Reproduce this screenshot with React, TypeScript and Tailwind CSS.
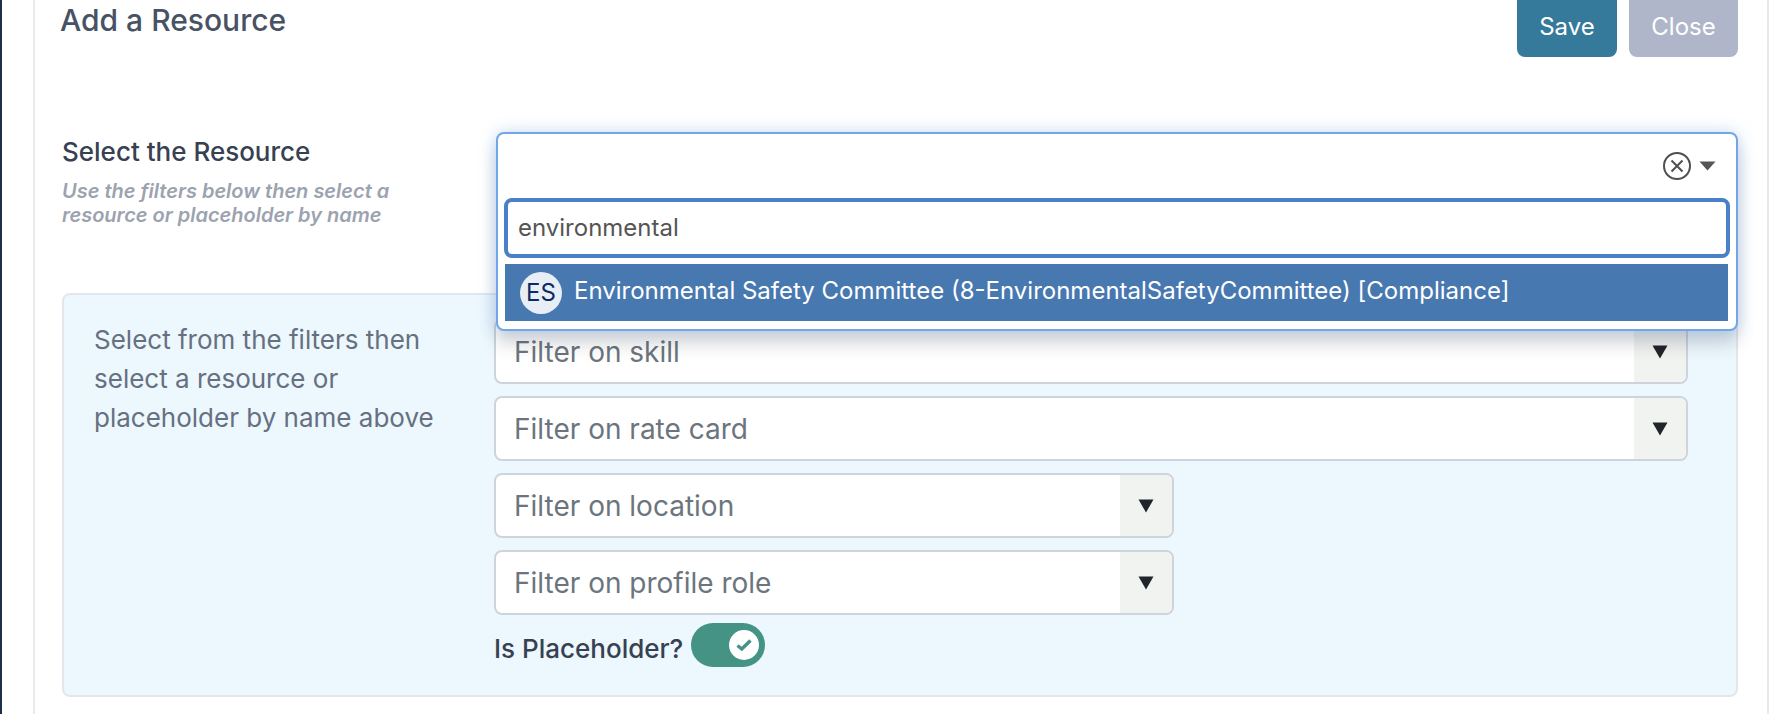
import React from "react";

function Caret() {
  return (
    <svg width="16" height="14" viewBox="0 0 16 14" aria-hidden="true">
      <path d="M0.5 0.5H15.5L8 13.5Z" fill="#212529" />
    </svg>
  );
}

function FilterSelect({ label, narrow }: { label: string; narrow?: boolean }) {
  return (
    <div
      className={`flex h-[65px] items-stretch overflow-hidden rounded-[8px] border-2 border-[#ced4da] bg-white ${
        narrow ? "w-[680px]" : "w-[1194px]"
      }`}
    >
      <div className="flex flex-1 items-center pl-[18px] text-[28px] text-[#6c757d]">{label}</div>
      <div className="flex w-[52px] items-center justify-center bg-[#f1f3f1]">
        <Caret />
      </div>
    </div>
  );
}

export default function App() {
  return (
    <div className="flex h-[714px] w-[1792px] overflow-hidden bg-white font-['Inter',sans-serif]">
      <div className="w-[2px] shrink-0 bg-[#1f2f47]" />
      <div className="ml-[31px] mr-[23px] flex h-[760px] flex-1 flex-col border-x-2 border-[#e9eaec] bg-white pl-[27px] pr-[29px]">
        <div className="-mt-[7px] flex items-start justify-between">
          <h1 className="-ml-[2px] mt-[6px] text-[30px] leading-[42px] font-medium text-[#475264]">Add a Resource</h1>
          <div className="flex gap-[12px]">
            <button className="flex h-[64px] w-[100px] items-center justify-center rounded-[8px] bg-[#367a9b] pt-[4px] text-[24px] text-white">
              Save
            </button>
            <button className="flex h-[64px] w-[109px] items-center justify-center rounded-[8px] bg-[#b0b6ca] pt-[4px] text-[24px] text-white">
              Close
            </button>
          </div>
        </div>

        <div className="mt-[75px] flex">
          <div className="w-[434px] shrink-0">
            <div className="mt-[2px] text-[26px] leading-[36px] font-medium text-[#374151]">Select the Resource</div>
            <div className="mt-[9px] text-[20px] leading-[24px] font-semibold text-[#9ca3af] italic">
              Use the filters below then select a<br />
              resource or placeholder by name
            </div>
          </div>
          <div className="relative h-[161px] flex-1">
            <div className="absolute inset-x-0 top-0 z-10 flex h-[199px] flex-col rounded-[8px] border-2 border-[#71a7e6] bg-white shadow-[0_0_16px_rgba(90,150,230,0.35),0_14px_18px_rgba(0,0,0,0.14)]">
              <div className="flex h-[64px] shrink-0 items-center justify-end pr-[20px]">
                <svg width="30" height="30" viewBox="0 0 30 30" fill="none" stroke="#4f4f4f" strokeWidth="2" aria-hidden="true">
                  <circle cx="15" cy="15" r="13" />
                  <path d="M9.5 9.5L20.5 20.5M20.5 9.5L9.5 20.5" />
                </svg>
                <svg className="ml-[7px]" width="17" height="10" viewBox="0 0 17 10" aria-hidden="true">
                  <path d="M0.5 0.5H16.5L8.5 9.5Z" fill="#555555" />
                </svg>
              </div>
              <div className="ml-[6px] mr-[6px] flex h-[60px] items-center rounded-[8px] border-4 border-[#4a80c8] pl-[10px] text-[24px] text-[#555555]">
                environmental
              </div>
              <div className="ml-[7px] mr-[8px] mt-[6px] flex h-[57px] items-center bg-[#4878b0] pl-[15px] text-[24px] text-white">
                <span className="mr-[12px] flex h-[42px] w-[42px] items-center justify-center rounded-full bg-[#e8eef6] text-[24px] text-[#0f2a63]">
                  ES
                </span>
                <span className="pb-[3px]">Environmental Safety Committee (8-EnvironmentalSafetyCommittee) [Compliance]</span>
              </div>
            </div>
          </div>
        </div>

        <div className="flex h-[404px] rounded-[8px] border-2 border-[#e3e7ec] bg-[#ecf7fe]">
          <div className="w-[430px] shrink-0 pl-[30px] pt-[25px] text-[26px] leading-[39px] text-[#667080]">
            Select from the filters then
            <br />
            select a resource or
            <br />
            placeholder by name above
          </div>
          <div className="flex flex-col gap-[12px] pt-[24px]">
            <FilterSelect label="Filter on skill" />
            <FilterSelect label="Filter on rate card" />
            <FilterSelect label="Filter on location" narrow />
            <FilterSelect label="Filter on profile role" narrow />
            <div className="-mt-[5px] flex items-start gap-[8px]">
              <span className="mt-[7px] text-[26px] leading-[39px] font-medium text-[#374151]">Is Placeholder?</span>
              <span className="mt-[1px] flex h-[44px] w-[74px] items-center justify-end rounded-full bg-[#449385] pr-[6px]">
                <span className="flex h-[30px] w-[30px] items-center justify-center rounded-full bg-white">
                  <svg width="18" height="14" viewBox="0 0 18 14" fill="none" stroke="#449385" strokeWidth="3.4" aria-hidden="true">
                    <path d="M2.5 7.5L6.8 11L15.5 2.5" />
                  </svg>
                </span>
              </span>
            </div>
          </div>
        </div>
      </div>
    </div>
  );
}
